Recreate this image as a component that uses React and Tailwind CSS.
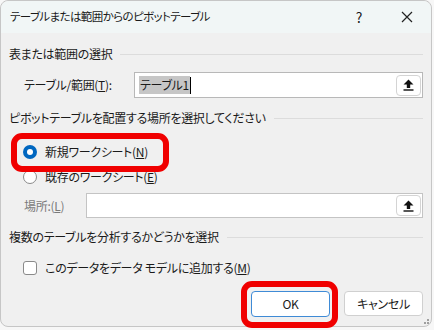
import React from 'react';

const UploadIcon = () => (
  <svg width="11" height="12" viewBox="0 0 11 12" fill="#111">
    <path d="M5.5 0.5 L10.5 5.5 L7.2 5.5 L7.2 9 L3.8 9 L3.8 5.5 L0.5 5.5 Z" />
    <rect x="0.5" y="10.3" width="10" height="1.4" />
  </svg>
);

const SectionHeader = ({ children, className }) => (
  <div className={`flex items-center gap-[8px] h-[20px] ${className}`}>
    <span className="whitespace-nowrap">{children}</span>
    <div className="flex-1 h-px bg-[#dcdcdc]" />
  </div>
);

const PickerButton = () => (
  <div className="w-[25px] h-[21px] rounded-[4px] border border-[#d4d4d4] bg-white flex items-center justify-center mr-[1px]">
    <UploadIcon />
  </div>
);

const Key = ({ children }) => <span className="underline underline-offset-[1px]">{children}</span>;

export default function App() {
  return (
    <div
      className="w-[434px] h-[330px] bg-[#f7f7f7] text-[12px] tracking-[-0.3px] text-[#1a1a1a] [font-feature-settings:'palt']"
      style={{ fontFamily: '"Noto Sans CJK JP", "Noto Sans", sans-serif' }}
    >
      <div className="relative w-[432px] h-[327px] rounded-lg border border-[#c6c6c6] bg-[#f0f0f0] flex flex-col">
        {/* title bar */}
        <div className="h-[32px] rounded-t-lg bg-[#f1f6f6] flex items-center pl-[9px]">
          <span className="flex-1 text-[11.5px] tracking-[-0.6px]">テーブルまたは範囲からのピボットテーブル</span>
          <span className="w-[20px] text-center text-[14px] mr-[32px]">?</span>
          <svg width="12" height="12" viewBox="0 0 12 12" className="mr-[18px]" stroke="#222" strokeWidth="1.2">
            <path d="M1 1 L11 11 M11 1 L1 11" />
          </svg>
        </div>

        <div className="flex flex-col px-[8px]">
          <SectionHeader className="mt-[11px]">表または範囲の選択</SectionHeader>

          <div className="mt-[8px] flex items-center h-[26px]">
            <span className="w-[125px] pl-[15px] whitespace-nowrap">
              テーブル/範囲(<Key>T</Key>):
            </span>
            <div className="flex-1 h-[26px] border border-[#b8b8b8] bg-white flex items-center pl-[4px]">
              <span className="bg-[#c6c6c6] px-[1px] leading-[18px]">テーブル1</span>
              <span className="w-px h-[17px] bg-black" />
              <div className="flex-1" />
              <PickerButton />
            </div>
          </div>

          <SectionHeader className="mt-[10px]">ピボットテーブルを配置する場所を選択してください</SectionHeader>

          <div className="relative mt-[14px] h-[20px] flex items-center pl-[14px] gap-[8px]">
            <div className="w-[14px] h-[14px] rounded-full bg-[#0067c0] flex items-center justify-center">
              <div className="w-[6px] h-[6px] rounded-full bg-white" />
            </div>
            <span>
              新規ワークシート(<Key>N</Key>)
            </span>
            <div className="absolute left-[2px] top-[-9px] w-[158px] h-[39px] rounded-[11px] border-[6px] border-[#f00000]" />
          </div>

          <div className="mt-[5px] h-[20px] flex items-center pl-[14px] gap-[8px]">
            <div className="w-[14px] h-[14px] rounded-full bg-white border border-[#8a8a8a]" />
            <span>
              既存のワークシート(<Key>E</Key>)
            </span>
          </div>

          <div className="mt-[6px] flex items-center h-[25px]">
            <span className="w-[77px] pl-[15px] text-[#7a7a7a] whitespace-nowrap">
              場所:(<Key>L</Key>)
            </span>
            <div className="flex-1 h-[25px] border border-[#c4c4c4] bg-white flex items-center justify-end">
              <PickerButton />
            </div>
          </div>

          <SectionHeader className="mt-[9px]">複数のテーブルを分析するかどうかを選択</SectionHeader>

          <div className="mt-[11px] h-[20px] flex items-center pl-[14px] gap-[8px]">
            <div className="w-[14px] h-[14px] rounded-[3px] bg-white border border-[#8a8a8a]" />
            <span>
              このデータをデータ モデルに追加する(<Key>M</Key>)
            </span>
          </div>

          <div className="mt-[13px] flex justify-end gap-[14px]">
            <div className="relative w-[79px] h-[26px] rounded-[4px] bg-white border border-[#3f8bd6] flex items-center justify-center">
              OK
              <div className="absolute left-[-11px] top-[-11px] w-[97px] h-[47px] rounded-[11px] border-[6px] border-[#f00000]" />
            </div>
            <div className="w-[79px] h-[25px] rounded-[4px] bg-white border border-[#d0d0d0] flex items-center justify-center">
              キャンセル
            </div>
          </div>
        </div>

        <div className="absolute right-[2px] bottom-[2px] grid grid-cols-3 gap-[1px]">
          <span />
          <span />
          <span className="w-[2px] h-[2px] bg-[#a0a0a0]" />
          <span />
          <span className="w-[2px] h-[2px] bg-[#a0a0a0]" />
          <span className="w-[2px] h-[2px] bg-[#a0a0a0]" />
        </div>
      </div>
    </div>
  );
}
